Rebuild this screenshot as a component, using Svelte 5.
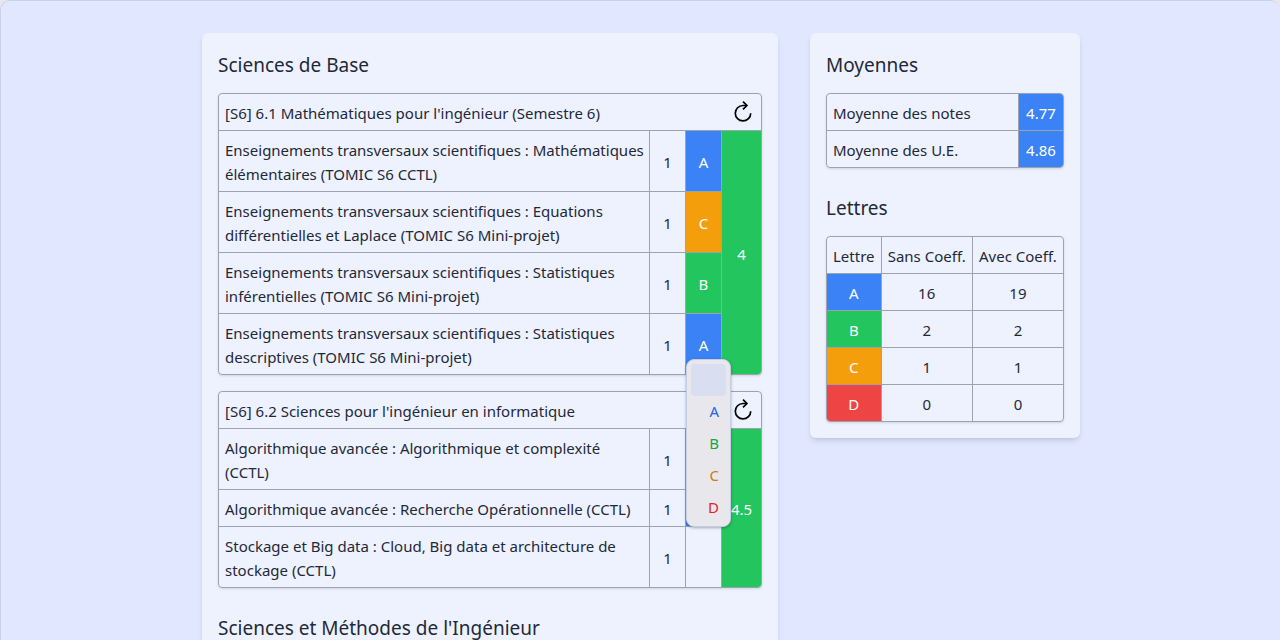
<script>
  const units = $state([
    {
      title: "[S6] 6.1 Mathématiques pour l'ingénieur (Semestre 6)",
      average: '4',
      courses: [
        { name: 'Enseignements transversaux scientifiques : Mathématiques élémentaires (TOMIC S6 CCTL)', coeff: 1, grade: 'A' },
        { name: 'Enseignements transversaux scientifiques : Equations différentielles et Laplace (TOMIC S6 Mini-projet)', coeff: 1, grade: 'C' },
        { name: 'Enseignements transversaux scientifiques : Statistiques inférentielles (TOMIC S6 Mini-projet)', coeff: 1, grade: 'B' },
        { name: 'Enseignements transversaux scientifiques : Statistiques descriptives (TOMIC S6 Mini-projet)', coeff: 1, grade: 'A', open: true },
      ],
    },
    {
      title: "[S6] 6.2 Sciences pour l'ingénieur en informatique",
      average: '4.5',
      courses: [
        { name: 'Algorithmique avancée : Algorithmique et complexité (CCTL)', coeff: 1, grade: 'A' },
        { name: 'Algorithmique avancée : Recherche Opérationnelle (CCTL)', coeff: 1, grade: 'A' },
        { name: 'Stockage et Big data : Cloud, Big data et architecture de stockage (CCTL)', coeff: 1, grade: '' },
      ],
    },
  ]);

  const averages = [
    ['Moyenne des notes', '4.77'],
    ['Moyenne des U.E.', '4.86'],
  ];

  const letters = [
    ['A', 16, 19],
    ['B', 2, 2],
    ['C', 1, 1],
    ['D', 0, 0],
  ];

  const choices = ['', 'A', 'B', 'C', 'D'];

  function pick(course, letter) {
    course.grade = letter;
    course.open = false;
  }

  function reset(unit) {
    for (const course of unit.courses) course.grade = '';
  }
</script>

<div class="page">
  <main class="card subjects">
    <h2>Sciences de Base</h2>
    {#each units as unit}
      <table class="unit">
        <thead>
          <tr>
            <th colspan="4" scope="colgroup">
              <div class="unit-head">
                <span>{unit.title}</span>
                <button class="reset" aria-label="Réinitialiser" onclick={() => reset(unit)}>
                  <svg viewBox="0 0 24 24" width="24" height="24" fill="none" stroke="currentColor" stroke-width="1.7">
                    <path d="M19.7 12.2a7.7 7.7 0 1 1-7.7-7.7h3.8" />
                    <path d="M12 .6l3.9 3.9L12 8.4" />
                  </svg>
                </button>
              </div>
            </th>
          </tr>
        </thead>
        <tbody>
          {#each unit.courses as course, i}
            <tr>
              <td class="name">{course.name}</td>
              <td class="coeff">{course.coeff}</td>
              <td class="grade {course.grade}">
                <select aria-label={course.name} bind:value={course.grade}>
                  {#each choices as letter}
                    <option value={letter}>{letter}</option>
                  {/each}
                </select>
                {#if course.open}
                  <div class="menu" role="listbox" aria-label="Note">
                    {#each choices as letter}
                      <button
                        role="option"
                        aria-selected={letter === ''}
                        aria-label={letter || 'Aucune note'}
                        class="choice {letter}"
                        onclick={() => pick(course, letter)}>{letter}</button>
                    {/each}
                  </div>
                {/if}
              </td>
              {#if i === 0}
                <td class="average" rowspan={unit.courses.length}>{unit.average}</td>
              {/if}
            </tr>
          {/each}
        </tbody>
      </table>
    {/each}
    <h2 class="next">Sciences et Méthodes de l'Ingénieur</h2>
  </main>

  <aside class="card summary">
    <h2>Moyennes</h2>
    <table>
      <tbody>
        {#each averages as [label, value]}
          <tr>
            <th scope="row">{label}</th>
            <td class="mean A">{value}</td>
          </tr>
        {/each}
      </tbody>
    </table>
    <h2 class="next">Lettres</h2>
    <table class="letters">
      <thead>
        <tr>
          <th scope="col">Lettre</th>
          <th scope="col">Sans Coeff.</th>
          <th scope="col">Avec Coeff.</th>
        </tr>
      </thead>
      <tbody>
        {#each letters as [letter, plain, weighted]}
          <tr>
            <td class={letter}>{letter}</td>
            <td>{plain}</td>
            <td>{weighted}</td>
          </tr>
        {/each}
      </tbody>
    </table>
  </aside>
</div>

<style>
  :global(body) {
    background: #e8e8ea;
  }

  .page {
    box-sizing: border-box;
    display: flex;
    justify-content: center;
    align-items: flex-start;
    gap: 32px;
    height: 100vh;
    padding: 32px 0 32px 1px;
    overflow: auto;
    scrollbar-width: none;
    border: solid #c7d2e8;
    border-width: 1px 0 0 1px;
    border-radius: 10px 10px 0 0;
    background: #e0e7ff;
    color: #1f2937;
    font: 15px/24px 'Noto Sans', 'Open Sans', sans-serif;
  }

  .card {
    box-sizing: border-box;
    padding: 16px;
    border-radius: 6px;
    background: #eef2ff;
    box-shadow: 0 4px 6px -1px rgb(0 0 0 / 0.1), 0 2px 4px -2px rgb(0 0 0 / 0.1);
  }

  .subjects {
    width: 576px;
  }

  .summary {
    width: 270px;
  }

  h2 {
    margin: 0 0 16px;
    padding-top: 4px;
    font-size: 19px;
    line-height: 24px;
    font-weight: 400;
  }

  .next {
    margin-top: 24px;
  }

  table {
    width: 100%;
    border: 1px solid #9ca3af;
    border-radius: 4px;
    border-spacing: 0;
    box-shadow: 0 1px 3px rgb(0 0 0 / 0.1), 0 1px 2px -1px rgb(0 0 0 / 0.1);
  }

  .unit + .unit {
    margin-top: 16px;
  }

  th,
  td {
    padding: 7px 6px 5px;
    font-weight: 400;
    text-align: left;
  }

  tbody tr + tr > *,
  thead + tbody > tr > * {
    border-top: 1px solid #9ca3af;
  }

  td + td,
  th + td,
  th + th {
    border-left: 1px solid #9ca3af;
  }

  tr:last-child > .A:last-child {
    border-bottom-right-radius: 3px;
  }

  tr:first-child > .A:last-child {
    border-top-right-radius: 3px;
  }

  .unit-head {
    display: flex;
    justify-content: space-between;
  }

  button,
  select {
    margin: 0;
    padding: 0;
    border: 0;
    background: none;
    color: inherit;
    font: inherit;
    cursor: pointer;
  }

  .reset {
    width: 24px;
    height: 24px;
    color: #000;
  }

  svg {
    display: block;
  }

  .name {
    padding-right: 3px;
  }

  .coeff,
  .grade,
  .average,
  .mean {
    text-align: center;
  }

  .coeff {
    width: 23px;
  }

  .grade {
    position: relative;
    width: 23px;
  }

  .average {
    width: 27px;
    border-bottom-right-radius: 3px;
    background: #22c55e;
    color: #fff;
  }

  .mean {
    width: 32px;
  }

  td.A {
    background: #3b82f6;
    color: #fff;
  }

  td.B {
    background: #22c55e;
    color: #fff;
  }

  td.C {
    background: #f59e0b;
    color: #fff;
  }

  td.D {
    border-bottom-left-radius: 3px;
    background: #ef4444;
    color: #fff;
  }

  select {
    display: block;
    width: 100%;
    appearance: none;
    text-align: center;
    text-align-last: center;
  }

  .menu {
    position: absolute;
    z-index: 1;
    top: 45px;
    left: 0;
    box-sizing: border-box;
    width: 45px;
    padding: 4px 4px 2px;
    border: 1px solid #c3cee2;
    border-radius: 8px;
    background: #e8e8ec;
    box-shadow: 0 1px 3px rgb(0 0 0 / 0.3);
  }

  .choice {
    display: block;
    width: 100%;
    height: 32px;
    padding: 0 7px 2px 0;
    border-radius: 4px;
    text-align: right;
  }

  .choice[aria-selected='true'] {
    background: #d9dff1;
  }

  .choice.A {
    color: #2563eb;
  }

  .choice.B {
    color: #16a34a;
  }

  .choice.C {
    color: #d97706;
  }

  .choice.D {
    color: #dc2626;
  }

  .letters td,
  .letters th {
    text-align: center;
    white-space: nowrap;
  }

  .letters th:first-child {
    width: 41px;
  }

  .letters th + th {
    padding-right: 5px;
    padding-left: 5px;
  }
</style>
